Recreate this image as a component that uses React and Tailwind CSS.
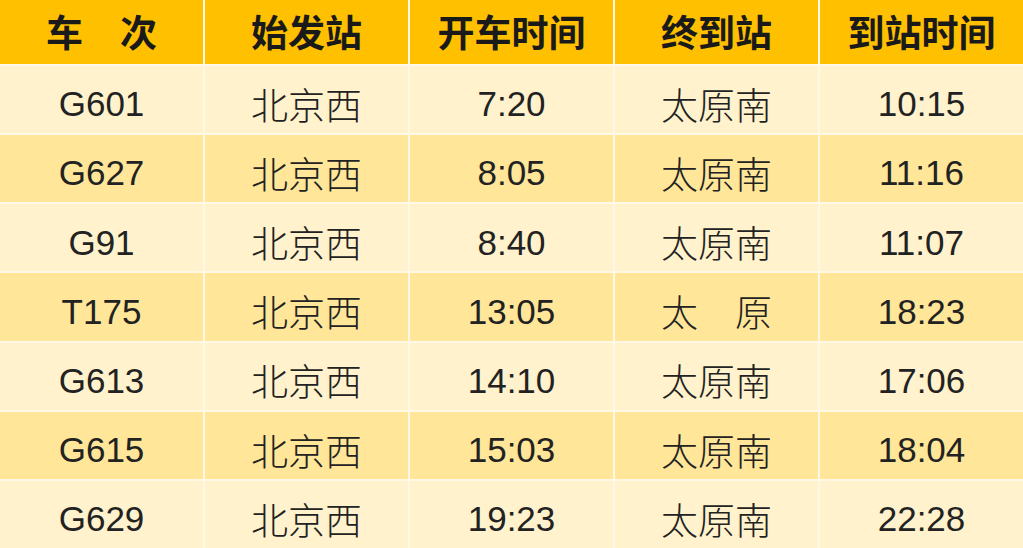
const headers = ['车　次', '始发站', '开车时间', '终到站', '到站时间'];

const trains = [
  ['G601', '北京西', '7:20', '太原南', '10:15'],
  ['G627', '北京西', '8:05', '太原南', '11:16'],
  ['G91', '北京西', '8:40', '太原南', '11:07'],
  ['T175', '北京西', '13:05', '太　原', '18:23'],
  ['G613', '北京西', '14:10', '太原南', '17:06'],
  ['G615', '北京西', '15:03', '太原南', '18:04'],
  ['G629', '北京西', '19:23', '太原南', '22:28'],
];

const cjk = "font-['Noto_Sans_CJK_SC',sans-serif]";
const latin = "font-['Liberation_Sans','Noto_Sans_CJK_SC',sans-serif]";

export default function App() {
  return (
    <div className="w-[1023px] h-[548px] bg-[#FFF8E6] grid grid-cols-5 grid-rows-[64px_repeat(7,1fr)] gap-[2px] overflow-hidden">
      {headers.map((h) => (
        <div
          key={h}
          className={`bg-[#FFC000] flex items-center justify-center text-[37px] font-bold text-[#1a1a1a] ${cjk}`}
        >
          {h}
        </div>
      ))}
      {trains.map((row, i) =>
        row.map((cell, j) => (
          <div
            key={`${i}-${j}`}
            className={`flex items-center justify-center pt-[10px] text-[#222] ${
              i % 2 === 0 ? 'bg-[#FFF2CC]' : 'bg-[#FFE699]'
            } ${j === 1 || j === 3 ? `${cjk} font-light text-[37px]` : `${latin} text-[35px]`}`}
          >
            {cell}
          </div>
        ))
      )}
    </div>
  );
}
